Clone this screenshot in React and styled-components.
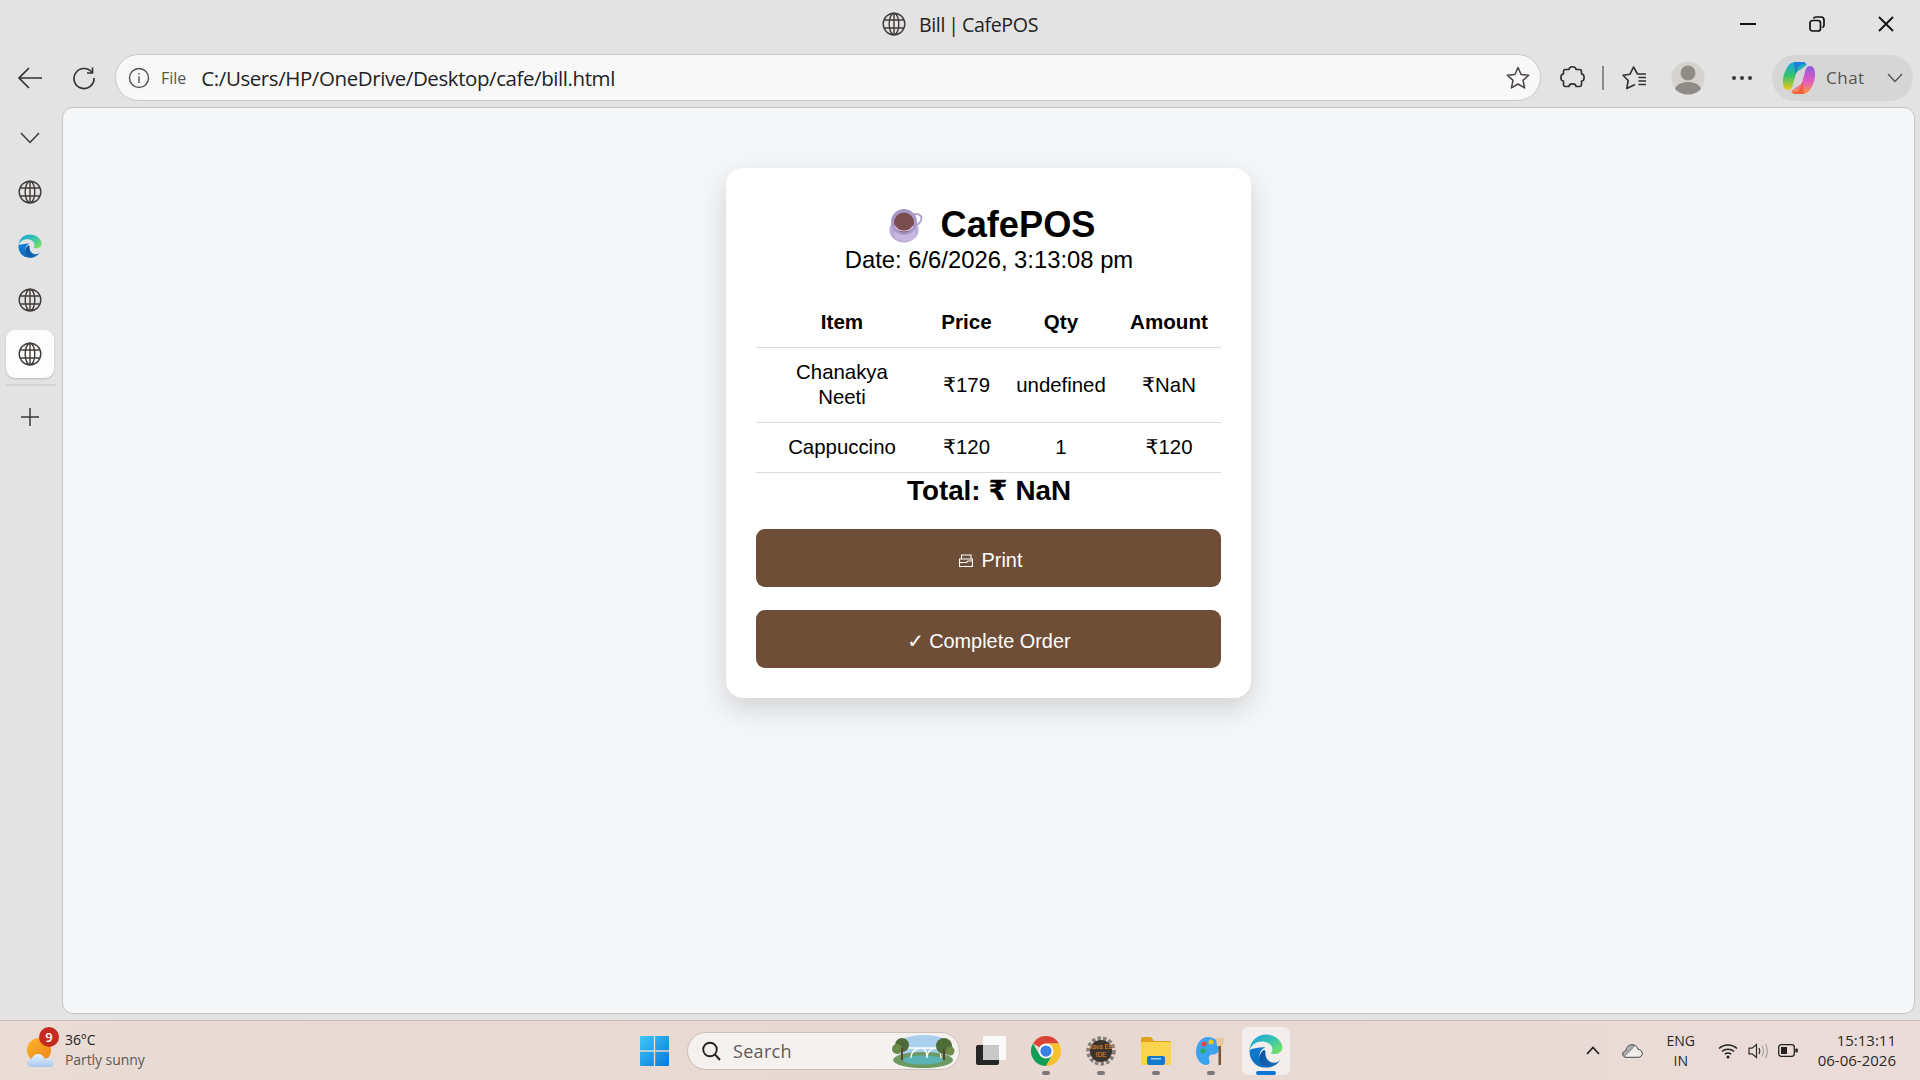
import React from "react";
import styled, { createGlobalStyle } from "styled-components";

const GlobalStyle = createGlobalStyle`
  html, body {
    margin: 0;
    padding: 0;
    width: 1920px;
    height: 1080px;
    overflow: hidden;
    background: #e3e3e3;
  }
  * { box-sizing: border-box; }
`;

const uiFont = `"Open Sans", "Noto Sans", sans-serif`;
const pageFont = `"Liberation Sans", Arial, "DejaVu Sans", sans-serif`;

const Screen = styled.div`
  display: flex;
  flex-direction: column;
  width: 1920px;
  height: 1080px;
  background: #e3e3e3;
  font-family: ${uiFont};
`;

const TitleBar = styled.div`
  display: grid;
  grid-template-columns: 1fr auto 1fr;
  align-items: center;
  height: 54px;
  padding-bottom: 6px;
  flex: none;
`;

const WindowTitle = styled.div`
  grid-column: 2;
  display: flex;
  align-items: center;
  gap: 13px;
  font-size: 19.6px;
  letter-spacing: -0.35px;
  word-spacing: -1.5px;
  color: #222;
`;

const WindowControls = styled.div`
  grid-column: 3;
  display: flex;
  justify-content: flex-end;
`;

const WindowButton = styled.div`
  width: 69px;
  height: 30px;
  display: flex;
  align-items: center;
  justify-content: center;
`;

const Toolbar = styled.div`
  display: flex;
  align-items: center;
  height: 53px;
  flex: none;
  padding: 0 7px 6px 3px;
`;

const ToolSlot = styled.div`
  width: 54px;
  height: 46px;
  flex: none;
  display: flex;
  align-items: center;
  justify-content: center;
`;

const AddressBar = styled.div`
  flex: 1;
  height: 47px;
  margin: 0 4px;
  display: flex;
  align-items: center;
  padding: 0 10px 0 12px;
  background: #f8f8f8;
  border: 1px solid #c9c9c9;
  border-radius: 24px;
`;

const FileLabel = styled.span`
  margin-left: 11px;
  font-size: 16px;
  color: #5a5450;
`;

const UrlText = styled.span`
  margin-left: 15px;
  flex: 1;
  font-size: 20.5px;
  letter-spacing: -0.42px;
  color: #222;
`;

const ToolDivider = styled.div`
  width: 2px;
  height: 24px;
  margin: 0 3px;
  flex: none;
  background: #8d8a88;
`;

const ChatPill = styled.div`
  width: 141px;
  height: 46px;
  margin-left: 3px;
  flex: none;
  display: flex;
  align-items: center;
  padding: 0 10px;
  background: #d6d6d6;
  border-radius: 23px;
`;

const ChatLabel = styled.span`
  margin-left: 10px;
  flex: 1;
  font-size: 17px;
  letter-spacing: 0.5px;
  color: #57534f;
`;

const MainRow = styled.div`
  flex: 1;
  min-height: 0;
  display: flex;
`;

const Sidebar = styled.div`
  width: 62px;
  flex: none;
  display: flex;
  flex-direction: column;
  align-items: flex-start;
  padding: 7px 0 0 6px;
`;

const SideSlot = styled.div`
  width: 48px;
  height: 48px;
  margin-bottom: 6px;
  display: flex;
  align-items: center;
  justify-content: center;
  border-radius: 9px;
  background: ${(p) => (p.$active ? "#fdfdfd" : "transparent")};
  box-shadow: ${(p) => (p.$active ? "0 1px 2px rgba(0,0,0,0.18)" : "none")};
`;

const SideDivider = styled.div`
  width: 50px;
  height: 2px;
  margin: 0 0 7px;
  background: #d2d2d2;
`;

const Content = styled.div`
  flex: 1;
  margin: 0 5px 6px 0;
  background: #f5f6f8;
  border: 1px solid #c6c6c6;
  border-radius: 11px;
  padding: 60px 1px 0 0;
`;

const BillCard = styled.div`
  width: 525px;
  height: 530px;
  margin: 0 auto;
  padding: 36px 30px 30px;
  background: #fff;
  border-radius: 17px;
  box-shadow: 0 11px 28px rgba(0, 0, 0, 0.15);
  font-family: ${pageFont};
  color: #000;
  text-align: center;
`;

const Brand = styled.h2`
  margin: 0;
  display: flex;
  align-items: center;
  justify-content: center;
  gap: 18px;
  height: 42px;
  font-size: 36.2px;
  font-weight: 700;
  line-height: 42px;
  padding-left: 8px;
`;

const BillDate = styled.p`
  margin: 0 0 24px;
  padding-left: 2px;
  font-size: 23.8px;
  line-height: 28px;
`;

const BillTable = styled.table`
  width: 465px;
  table-layout: fixed;
  border-collapse: collapse;
  font-size: 20.4px;
  line-height: 25px;

  th, td {
    padding: 12px 8px;
    text-align: center;
    border-bottom: 1px solid #dcdcdc;
  }

  th {
    padding-top: 11px;
    padding-bottom: 13px;
    font-size: 20.6px;
    font-weight: 700;
  }

  th:nth-child(1), td:nth-child(1) {
    width: 173px;
    padding-left: 14px;
    padding-right: 14px;
  }
  th:nth-child(2), td:nth-child(2) { width: 76px; padding-left: 0; padding-right: 0; }
  th:nth-child(3), td:nth-child(3) { width: 113px; padding-left: 0; padding-right: 0; }
  th:nth-child(4), td:nth-child(4) { width: 103px; }
`;

const TotalLine = styled.div`
  height: 34px;
  padding-left: 2px;
  font-size: 27.8px;
  font-weight: 700;
  line-height: 35px;
  margin-bottom: 22px;
`;

const ActionButton = styled.button`
  display: flex;
  align-items: center;
  justify-content: center;
  gap: ${(p) => p.$gap}px;
  width: 465px;
  height: 58px;
  margin: 0 0 23px;
  padding: 4px 0 0 ${(p) => p.$inset}px;
  border: 0;
  border-radius: 9px;
  background: #6f4e37;
  color: #fff;
  font-family: ${pageFont};
  font-size: 19.9px;
`;

const CheckMark = styled.span`
  font-family: "DejaVu Sans", sans-serif;
  font-size: 20px;
  line-height: 20px;
`;

const Taskbar = styled.div`
  flex: none;
  height: 60px;
  display: grid;
  grid-template-columns: 640px auto 1fr;
  align-items: center;
  background: linear-gradient(90deg, #e9dcd4 0%, #e8d8d1 50%, #ebdcd9 100%);
  border-top: 1px solid #c8bcb7;
`;

const Weather = styled.div`
  display: flex;
  align-items: center;
  padding-left: 27px;
`;

const WeatherIcon = styled.div`
  position: relative;
  width: 28px;
  height: 30px;
  margin-right: 10px;
  margin-top: 4px;
`;

const WeatherBadge = styled.span`
  position: absolute;
  top: -11px;
  left: 12px;
  width: 20px;
  height: 20px;
  border-radius: 50%;
  background: #c42b1c;
  color: #fff;
  font-size: 13px;
  font-weight: 600;
  line-height: 20px;
  text-align: center;
`;

const WeatherText = styled.div`
  display: flex;
  flex-direction: column;
  margin-top: -2px;
  font-size: 14px;
  line-height: 20px;
  letter-spacing: -0.08px;
`;

const WeatherTemp = styled.span`
  color: #222;
`;

const WeatherNote = styled.span`
  color: #5c5757;
`;

const TaskCenter = styled.div`
  display: flex;
  align-items: center;
`;

const StartSlot = styled.div`
  width: 29px;
  height: 30px;
  margin-right: 18px;
`;

const SearchBox = styled.div`
  width: 273px;
  height: 38px;
  margin-right: 3.5px;
  display: flex;
  align-items: center;
  padding: 0 4px 0 14px;
  background: #f5f1ef;
  border: 1px solid #cdbfba;
  border-radius: 19px;
`;

const SearchText = styled.span`
  flex: 1;
  margin-left: 12px;
  font-size: 18px;
  letter-spacing: 0.3px;
  color: #5e5a58;
`;

const TaskSlot = styled.div`
  position: relative;
  width: ${(p) => (p.$active ? "48px" : "55px")};
  margin-left: ${(p) => (p.$active ? "3.5px" : "0")};
  height: 48px;
  display: flex;
  align-items: center;
  justify-content: center;
  border-radius: 6px;
  background: ${(p) => (p.$active ? "#f3eeec" : "transparent")};
`;

const TaskDot = styled.span`
  position: absolute;
  bottom: 0;
  left: 50%;
  transform: translateX(-50%);
  width: ${(p) => (p.$active ? "20px" : "8px")};
  height: 4px;
  border-radius: 2px;
  background: ${(p) => (p.$active ? "#0a78d4" : "#7d7876")};
`;

const Tray = styled.div`
  display: flex;
  align-items: center;
  justify-content: flex-end;
  padding-right: 24px;
`;

const TraySlot = styled.div`
  width: ${(p) => p.$w}px;
  display: flex;
  justify-content: center;
  align-items: center;
`;

const LangBlock = styled.div`
  width: 48px;
  margin: 0 8px 0 4px;
  display: flex;
  flex-direction: column;
  align-items: center;
  font-size: 14px;
  line-height: 20px;
  color: #2a2a2a;
`;

const Clock = styled.div`
  margin: -2px 0 0 15px;
  display: flex;
  flex-direction: column;
  align-items: flex-end;
  font-size: 15px;
  line-height: 20px;
  color: #2a2a2a;
`;

const Globe = ({ size = 24 }) => (
  <svg width={size} height={size} viewBox="0 0 24 24" fill="none" stroke="#403c3a" strokeWidth="1.4">
    <circle cx="12" cy="12" r="10.8" />
    <ellipse cx="12" cy="12" rx="4.8" ry="10.8" />
    <path d="M12 1.2v21.6M2.2 8h19.6M2.2 16h19.6" />
  </svg>
);

const EdgeLogo = ({ size = 24, id = "e" }) => (
  <svg width={size} height={size} viewBox="0 0 32 32">
    <defs>
      <linearGradient id={`${id}a`} x1="0" y1="0" x2="1" y2="0.7">
        <stop offset="0" stopColor="#1b9de2" />
        <stop offset="0.55" stopColor="#34c1b4" />
        <stop offset="1" stopColor="#6fe06a" />
      </linearGradient>
      <linearGradient id={`${id}b`} x1="0" y1="0" x2="0.4" y2="1">
        <stop offset="0" stopColor="#0f7fd6" />
        <stop offset="1" stopColor="#0f6cbd" />
      </linearGradient>
      <linearGradient id={`${id}c`} x1="0" y1="0" x2="1" y2="0.3">
        <stop offset="0" stopColor="#0c4f9e" />
        <stop offset="1" stopColor="#1a6fc0" />
      </linearGradient>
    </defs>
    <path d="M16 .5C7.5.5 1 7 .5 15c2-5 6.5-8 11.5-8 6 0 10 3.5 10 7.5 0 1.5-.6 2.8-1.6 3.6 3.5 1.8 10.600.6 11-4.600C31.800 6.500 24.500.5 16 .5z" fill={`url(#${id}a)`} />
    <path d="M.5 15C0 24 6 31.500 15 31.500c2 0 3.500-.3 5-1-4.500-.5-9.800-4-10-10-.1-3.500 2-6.500 5.500-8-7 0-13 1.500-15 2.500z" fill={`url(#${id}b)`} />
    <path d="M15.500 17.500c-.5 5 3 9.500 8 9.500 2.500 0 4.500-1 6-3-2.500 5-8 7.500-12 7.500-4.500 0-7.500-5-7.500-9.500 0-3.500 2-6 4.500-7.500-.2.8 1.300 1.200 1 3z" fill={`url(#${id}c)`} />
  </svg>
);

const CopilotLogo = () => (
  <svg width="34" height="34" viewBox="0 0 34 34">
    <defs>
      <linearGradient id="ca" x1="0" y1="0" x2="0" y2="1">
        <stop offset="0" stopColor="#1aa5e8" />
        <stop offset="0.5" stopColor="#35c26b" />
        <stop offset="1" stopColor="#f5c916" />
      </linearGradient>
      <linearGradient id="cb" x1="0" y1="0" x2="0" y2="1">
        <stop offset="0" stopColor="#8e5be0" />
        <stop offset="0.55" stopColor="#e25cc0" />
        <stop offset="1" stopColor="#ff9a3d" />
      </linearGradient>
    </defs>
    <path d="M13 1h8c2 0 3 1.500 3.500 3L18 9c-3 1-4 3-5 7l-2.500 9C9.500 28 8 29 6 29 2.500 29 .5 25 1 19 1.500 12 6 1 13 1z" fill="url(#ca)" />
    <path d="M21 33h-8c-2 0-3-1.500-3.500-3l6.500-5c3-1 4-3 5-7l2.500-9C24.500 6 26 5 28 5c3.500 0 5.500 4 5 10-.5 7-5 18-12 18z" fill="url(#cb)" />
    <path d="M12 1h9c2 0 3 1.500 3.500 3-3-2-6-1-7.500 1-2 2.500-3 7-3.500 9z" fill="#1f6fe0" opacity="0.75" />
    <path d="M22 33h-9c-2 0-3-1.500-3.500-3 3 2 6 1 7.500-1 2-2.500 3-7 3.500-9z" fill="#f0573c" opacity="0.85" />
  </svg>
);

const CupIcon = () => (
  <svg width="34" height="36" viewBox="0 0 34 36">
    <ellipse cx="15" cy="23" rx="14.5" ry="12.5" fill="#b9aad6" />
    <ellipse cx="16" cy="27" rx="11" ry="7" fill="#c6b9df" />
    <path d="M24 8c4-2.500 9 0 8.500 4-.5 4-4.500 6.500-8 6" fill="none" stroke="#b3a4d2" strokeWidth="2" />
    <circle cx="15" cy="15" r="13" fill="#a999c8" />
    <circle cx="15" cy="15.5" r="10" fill="#7b4d4f" />
    <path d="M6 19c2 4 6 5 9 5s7-1 9-5" fill="none" stroke="#d3c8e6" strokeWidth="1.2" />
  </svg>
);

const PrinterGlyph = () => (
  <svg width="14" height="13" viewBox="0 0 14 13" fill="none" stroke="#fff" strokeWidth="1.1">
    <path d="M2.500 5V1h9.500v4M.5 5h13v7.500H.5zM.5 8.500h7l1.500-1.500h4.500" />
  </svg>
);

const Icons = {
  back: (
    <svg width="26" height="24" viewBox="0 0 26 24" fill="none" stroke="#333" strokeWidth="1.7">
      <path d="M25 12H2M12 2 2 12l10 10" />
    </svg>
  ),
  refresh: (
    <svg width="24" height="24" viewBox="0 0 24 24" fill="none" stroke="#333" strokeWidth="1.7">
      <path d="M20 6.500A10 10 0 1 0 22 12" />
      <path d="M20.500 1.500v5.500H15" />
    </svg>
  ),
  info: (
    <svg width="22" height="22" viewBox="0 0 22 22" fill="none" stroke="#55504c" strokeWidth="1.4">
      <circle cx="11" cy="11" r="9.5" />
      <path d="M11 9.500V16M11 6v1.600" />
    </svg>
  ),
  star: (
    <svg width="24" height="24" viewBox="0 0 24 24" fill="none" stroke="#4a4542" strokeWidth="1.5" strokeLinejoin="round">
      <path d="m12 1.500 3.100 7 7.600.8-5.700 5.100 1.600 7.500L12 18l-6.600 3.900L7 14.400 1.300 9.300l7.600-.8z" />
    </svg>
  ),
  puzzle: (
    <svg width="25" height="25" viewBox="0 0 25 25" fill="none" stroke="#332f2d" strokeWidth="1.6" strokeLinejoin="round">
      <path d="M9 4.500C9 .8 16 .8 16 4.500h3.500q2 0 2 2V9c3.500 0 3.500 7 0 7v3.500q0 2-2 2H16c0-3.500-7-3.500-7 0H5.500q-2 0-2-2V16c-3.500 0-3.500-7 0-7V6.500q0-2 2-2z" />
    </svg>
  ),
  favorites: (
    <svg width="25" height="24" viewBox="0 0 25 24" fill="none" stroke="#332f2d" strokeWidth="1.6" strokeLinejoin="round">
      <path d="M24 8h-8.500L11.500 1 8 8.200 1 9.200l5.200 5.300L4.800 22.500l8.200-4" />
      <path d="M16.500 11.500H24M16.500 15H24M16.500 18.500H24" />
    </svg>
  ),
  avatar: (
    <svg width="34" height="34" viewBox="0 0 34 34">
      <circle cx="17" cy="17" r="16.5" fill="#d4d3ce" />
      <circle cx="17" cy="12" r="7.5" fill="#8f8b86" />
      <path d="M4 28c2-5 7-7 13-7s11 2 13 7c-3 3.500-8 5.500-13 5.500S7 31.500 4 28z" fill="#8f8b86" />
    </svg>
  ),
  dots: (
    <svg width="22" height="6" viewBox="0 0 22 6" fill="#3a3634">
      <circle cx="3" cy="3" r="2" />
      <circle cx="11" cy="3" r="2" />
      <circle cx="19" cy="3" r="2" />
    </svg>
  ),
  chevron: (
    <svg width="16" height="10" viewBox="0 0 16 10" fill="none" stroke="#55504c" strokeWidth="1.3">
      <path d="m1 1 7 7.500L15 1" />
    </svg>
  ),
  plus: (
    <svg width="20" height="20" viewBox="0 0 20 20" fill="none" stroke="#3c3836" strokeWidth="1.5">
      <path d="M10 1v18M1 10h18" />
    </svg>
  ),
  sideChevron: (
    <svg width="20" height="12" viewBox="0 0 20 12" fill="none" stroke="#3c3836" strokeWidth="1.5">
      <path d="m1 1 9 9.500L19 1" />
    </svg>
  ),
  minimize: (
    <svg width="16" height="4" viewBox="0 0 16 4">
      <rect width="16" height="2" y="1" fill="#111" />
    </svg>
  ),
  restore: (
    <svg width="16" height="16" viewBox="0 0 16 16" fill="none" stroke="#111" strokeWidth="1.7">
      <rect x="1" y="4.5" width="10.5" height="10.5" rx="2.5" />
      <path d="M4.500 2.500C5 1.500 6 1 7 1h5c1.800 0 3 1.200 3 3v5c0 1-.5 2-1.500 2.500" />
    </svg>
  ),
  close: (
    <svg width="16" height="16" viewBox="0 0 16 16" fill="none" stroke="#111" strokeWidth="1.8">
      <path d="m1 1 14 14M15 1 1 15" />
    </svg>
  ),
  weather: (
    <svg width="28" height="30" viewBox="0 0 28 30">
      <defs>
        <linearGradient id="sun" x1="0" y1="0" x2="1" y2="1">
          <stop offset="0" stopColor="#fbb62a" />
          <stop offset="1" stopColor="#f0821c" />
        </linearGradient>
        <linearGradient id="cloud" x1="0" y1="0" x2="0" y2="1">
          <stop offset="0" stopColor="#e6f1fc" />
          <stop offset="1" stopColor="#a8c8f0" />
        </linearGradient>
      </defs>
      <circle cx="12" cy="12" r="12" fill="url(#sun)" />
      <path d="M5 29c-3 0-5-2-5-4s2-4 4.500-4c1-3 3.500-5 6.500-5s6 2 6.500 5c1-1 2-1 3-1 3 0 6 2 6 4.500S25.500 29 23 29z" fill="url(#cloud)" />
    </svg>
  ),
  start: (
    <svg width="29" height="30" viewBox="0 0 29 30">
      <defs>
        <linearGradient id="win" x1="0" y1="0" x2="1" y2="1">
          <stop offset="0" stopColor="#3fc6f5" />
          <stop offset="1" stopColor="#0a77d6" />
        </linearGradient>
      </defs>
      <path d="M1 0h12.800v14.300H0V1a1 1 0 0 1 1-1zM15.200 0H28a1 1 0 0 1 1 1v13.300H15.200zM0 15.700h13.800V30H1a1 1 0 0 1-1-1zM15.200 15.700H29V29a1 1 0 0 1-1 1H15.200z" fill="url(#win)" />
    </svg>
  ),
  search: (
    <svg width="19" height="20" viewBox="0 0 19 20" fill="none" stroke="#222" strokeWidth="1.9">
      <circle cx="8" cy="8.5" r="6.8" />
      <path d="m13 13.500 5 5.500" />
    </svg>
  ),
  scenery: (
    <svg width="64" height="34" viewBox="0 0 64 34">
      <ellipse cx="33" cy="14" rx="29" ry="13" fill="#a9cfee" />
      <ellipse cx="32" cy="26" rx="30" ry="8" fill="#6d9a62" />
      <ellipse cx="32" cy="26" rx="20" ry="4.5" fill="#5bb3b5" />
      <path d="M14 14h36M20 24c0-7 6-10 10-10s6 4 6 10M36 24c0-7 5-10 8-10s6 4 6 10" fill="none" stroke="#fff" strokeWidth="1.3" />
      <circle cx="11" cy="11" r="7" fill="#4d6b3a" />
      <circle cx="6" cy="15" r="5" fill="#6a8a4a" />
      <rect x="10" y="14" width="2" height="12" fill="#5a4630" />
      <circle cx="53" cy="12" r="8" fill="#4e6c38" />
      <circle cx="59" cy="17" r="4.5" fill="#6b8c48" />
      <rect x="52" y="15" width="2" height="11" fill="#5a4630" />
    </svg>
  ),
  taskView: (
    <svg width="30" height="29" viewBox="0 0 30 29">
      <rect x="7" y="0" width="23" height="24" rx="2" fill="#fafafa" />
      <rect x="0" y="9" width="23" height="20" rx="2" fill="#262626" />
      <rect x="7" y="9" width="16" height="15" fill="#c9c9c9" />
    </svg>
  ),
  chrome: (
    <svg width="30" height="30" viewBox="0 0 48 48">
      <path d="M44.800 12H24a12 12 0 0 0-10.400 6L3.200 12a24 24 0 0 1 41.600 0z" fill="#db4437" />
      <path d="M3.200 12l10.400 18a12 12 0 0 0 20.800 0L24 48A24 24 0 0 1 3.200 12z" fill="#0f9d58" />
      <path d="M44.800 12A24 24 0 0 1 24 48l10.400-18A12 12 0 0 0 24 12z" fill="#fbc02d" />
      <circle cx="24" cy="24" r="11.5" fill="#fff" />
      <circle cx="24" cy="24" r="9" fill="#3b82e6" />
    </svg>
  ),
  java: (
    <svg width="30" height="30" viewBox="0 0 30 30">
      <circle cx="15" cy="15" r="12.5" fill="none" stroke="#85807c" strokeWidth="4.5" strokeDasharray="3.5 2" />
      <circle cx="15" cy="15" r="11" fill="#3a3330" />
      <text x="15" y="13" fontSize="6.5" fill="#f08a24" textAnchor="middle" fontFamily="Liberation Sans">Java EE</text>
      <text x="15" y="21" fontSize="6.5" fill="#f08a24" textAnchor="middle" fontFamily="Liberation Sans">IDE</text>
    </svg>
  ),
  folder: (
    <svg width="30" height="28" viewBox="0 0 30 28">
      <path d="M0 2a2 2 0 0 1 2-2h8l3 4h15a2 2 0 0 1 2 2v3H0z" fill="#e0a21a" />
      <rect x="0" y="5" width="30" height="23" rx="1.5" fill="#fbd44f" />
      <rect x="6" y="19" width="18" height="9" rx="2" fill="#1478cc" />
      <rect x="10" y="21" width="10" height="1.5" fill="#9fd0f2" />
    </svg>
  ),
  palette: (
    <svg width="30" height="30" viewBox="0 0 30 30">
      <path d="M12 1C5 1 0 8 0 16c0 7 5 13 10 13 4 0 4-3 3-6-.8-2.500 1-4.500 4-4.500 3.500 0 6-2 6-7C23 5 18 1 12 1z" fill="#3ea3ee" />
      <circle cx="7" cy="15" r="2.5" fill="#2bb24c" />
      <circle cx="8" cy="8" r="2.5" fill="#e8483a" />
      <circle cx="15" cy="6" r="2.5" fill="#f5c518" />
      <rect x="22.5" y="9" width="2.5" height="20" fill="#7a5432" />
      <path d="M20 2h8l-1 8h-6z" fill="#e8c79a" />
    </svg>
  ),
  trayChevron: (
    <svg width="14" height="9" viewBox="0 0 14 9" fill="none" stroke="#222" strokeWidth="1.8">
      <path d="m1 8 6-6.500L13 8" />
    </svg>
  ),
  cloud: (
    <svg width="21" height="14" viewBox="0 0 21 14">
      <defs>
        <linearGradient id="odc" x1="0" y1="0" x2="1" y2="0.6">
          <stop offset="0" stopColor="#e8e8e8" />
          <stop offset="0.5" stopColor="#9a9a9a" />
          <stop offset="0.51" stopColor="#f0ecec" />
        </linearGradient>
      </defs>
      <path d="M4 13.300C2 13.300.7 11.800.7 10S2 6.900 3.800 6.700C4.500 3 7 .7 10 .7s5 1.800 6 4.500c2.500.2 4.300 2.200 4.300 4.300 0 2.200-1.700 3.800-3.800 3.800z" fill="url(#odc)" stroke="#4a4644" strokeWidth="1" />
    </svg>
  ),
  wifi: (
    <svg width="20" height="16" viewBox="0 0 20 16" fill="none" stroke="#222" strokeWidth="1.4">
      <path d="M1 5.500C6 .8 14 .8 19 5.500M3.800 8.500c3.500-3 8.900-3 12.400 0M6.700 11.300c2-1.600 4.600-1.600 6.600 0" />
      <circle cx="10" cy="14" r="1.5" fill="#222" stroke="none" />
    </svg>
  ),
  volume: (
    <svg width="20" height="16" viewBox="0 0 20 16" fill="none" stroke="#2a2a2a" strokeWidth="1.2">
      <path d="M1 5.200h3L8.500 1.500v13L4 10.800H1z" />
      <path d="M11 5c1 1.800 1 4.200 0 6" />
      <path d="M14 2.500c1.800 3.300 1.800 7.700 0 11M17.500.8c2.300 4.500 2.300 9.900 0 14.400" stroke="#a9a3a0" />
    </svg>
  ),
  battery: (
    <svg width="20" height="13" viewBox="0 0 20 13">
      <rect x="0.7" y="0.7" width="15.6" height="11.6" rx="2.5" fill="none" stroke="#222" strokeWidth="1.3" />
      <rect x="3" y="3" width="6" height="7" fill="#222" />
      <rect x="17.3" y="4.5" width="2.5" height="4" rx="1" fill="#222" />
    </svg>
  ),
};

const bills = [
  { name: "Chanakya Neeti", price: "₹179", qty: "undefined", amount: "₹NaN" },
  { name: "Cappuccino", price: "₹120", qty: "1", amount: "₹120" },
];

const sideItems = ["globe", "edge", "globe"];

export default function App() {
  return (
    <Screen>
      <GlobalStyle />
      <TitleBar>
        <WindowTitle>
          <Globe size={24} />
          Bill | CafePOS
        </WindowTitle>
        <WindowControls>
          <WindowButton>{Icons.minimize}</WindowButton>
          <WindowButton>{Icons.restore}</WindowButton>
          <WindowButton>{Icons.close}</WindowButton>
        </WindowControls>
      </TitleBar>

      <Toolbar>
        <ToolSlot>{Icons.back}</ToolSlot>
        <ToolSlot>{Icons.refresh}</ToolSlot>
        <AddressBar>
          {Icons.info}
          <FileLabel>File</FileLabel>
          <UrlText>C:/Users/HP/OneDrive/Desktop/cafe/bill.html</UrlText>
          {Icons.star}
        </AddressBar>
        <ToolSlot>{Icons.puzzle}</ToolSlot>
        <ToolDivider />
        <ToolSlot>{Icons.favorites}</ToolSlot>
        <ToolSlot>{Icons.avatar}</ToolSlot>
        <ToolSlot>{Icons.dots}</ToolSlot>
        <ChatPill>
          <CopilotLogo />
          <ChatLabel>Chat</ChatLabel>
          {Icons.chevron}
        </ChatPill>
      </Toolbar>

      <MainRow>
        <Sidebar>
          <SideSlot>{Icons.sideChevron}</SideSlot>
          {sideItems.map((kind, i) => (
            <SideSlot key={i}>
              {kind === "edge" ? <EdgeLogo size={24} id="side" /> : <Globe size={24} />}
            </SideSlot>
          ))}
          <SideSlot $active>
            <Globe size={24} />
          </SideSlot>
          <SideDivider />
          <SideSlot>{Icons.plus}</SideSlot>
        </Sidebar>

        <Content>
          <BillCard>
            <Brand>
              <CupIcon />
              CafePOS
            </Brand>
            <BillDate>Date: 6/6/2026, 3:13:08 pm</BillDate>
            <BillTable>
              <thead>
                <tr>
                  <th>Item</th>
                  <th>Price</th>
                  <th>Qty</th>
                  <th>Amount</th>
                </tr>
              </thead>
              <tbody>
                {bills.map((row) => (
                  <tr key={row.name}>
                    <td>{row.name}</td>
                    <td>{row.price}</td>
                    <td>{row.qty}</td>
                    <td>{row.amount}</td>
                  </tr>
                ))}
              </tbody>
            </BillTable>
            <TotalLine>Total: ₹ NaN</TotalLine>
            <ActionButton $gap={9} $inset={5}>
              <PrinterGlyph />
              Print
            </ActionButton>
            <ActionButton $gap={5} $inset={2}>
              <CheckMark>✓</CheckMark>
              Complete Order
            </ActionButton>
          </BillCard>
        </Content>
      </MainRow>

      <Taskbar>
        <Weather>
          <WeatherIcon>
            {Icons.weather}
            <WeatherBadge>9</WeatherBadge>
          </WeatherIcon>
          <WeatherText>
            <WeatherTemp>36°C</WeatherTemp>
            <WeatherNote>Partly sunny</WeatherNote>
          </WeatherText>
        </Weather>

        <TaskCenter>
          <StartSlot>{Icons.start}</StartSlot>
          <SearchBox>
            {Icons.search}
            <SearchText>Search</SearchText>
            {Icons.scenery}
          </SearchBox>
          <TaskSlot>{Icons.taskView}</TaskSlot>
          <TaskSlot>
            {Icons.chrome}
            <TaskDot />
          </TaskSlot>
          <TaskSlot>
            {Icons.java}
            <TaskDot />
          </TaskSlot>
          <TaskSlot>
            {Icons.folder}
            <TaskDot />
          </TaskSlot>
          <TaskSlot>
            {Icons.palette}
            <TaskDot />
          </TaskSlot>
          <TaskSlot $active>
            <EdgeLogo size={34} id="task" />
            <TaskDot $active />
          </TaskSlot>
        </TaskCenter>

        <Tray>
          <TraySlot $w={40}>{Icons.trayChevron}</TraySlot>
          <TraySlot $w={40}>{Icons.cloud}</TraySlot>
          <LangBlock>
            <span>ENG</span>
            <span>IN</span>
          </LangBlock>
          <TraySlot $w={30}>{Icons.wifi}</TraySlot>
          <TraySlot $w={30}>{Icons.volume}</TraySlot>
          <TraySlot $w={30}>{Icons.battery}</TraySlot>
          <Clock>
            <span>15:13:11</span>
            <span>06-06-2026</span>
          </Clock>
        </Tray>
      </Taskbar>
    </Screen>
  );
}
